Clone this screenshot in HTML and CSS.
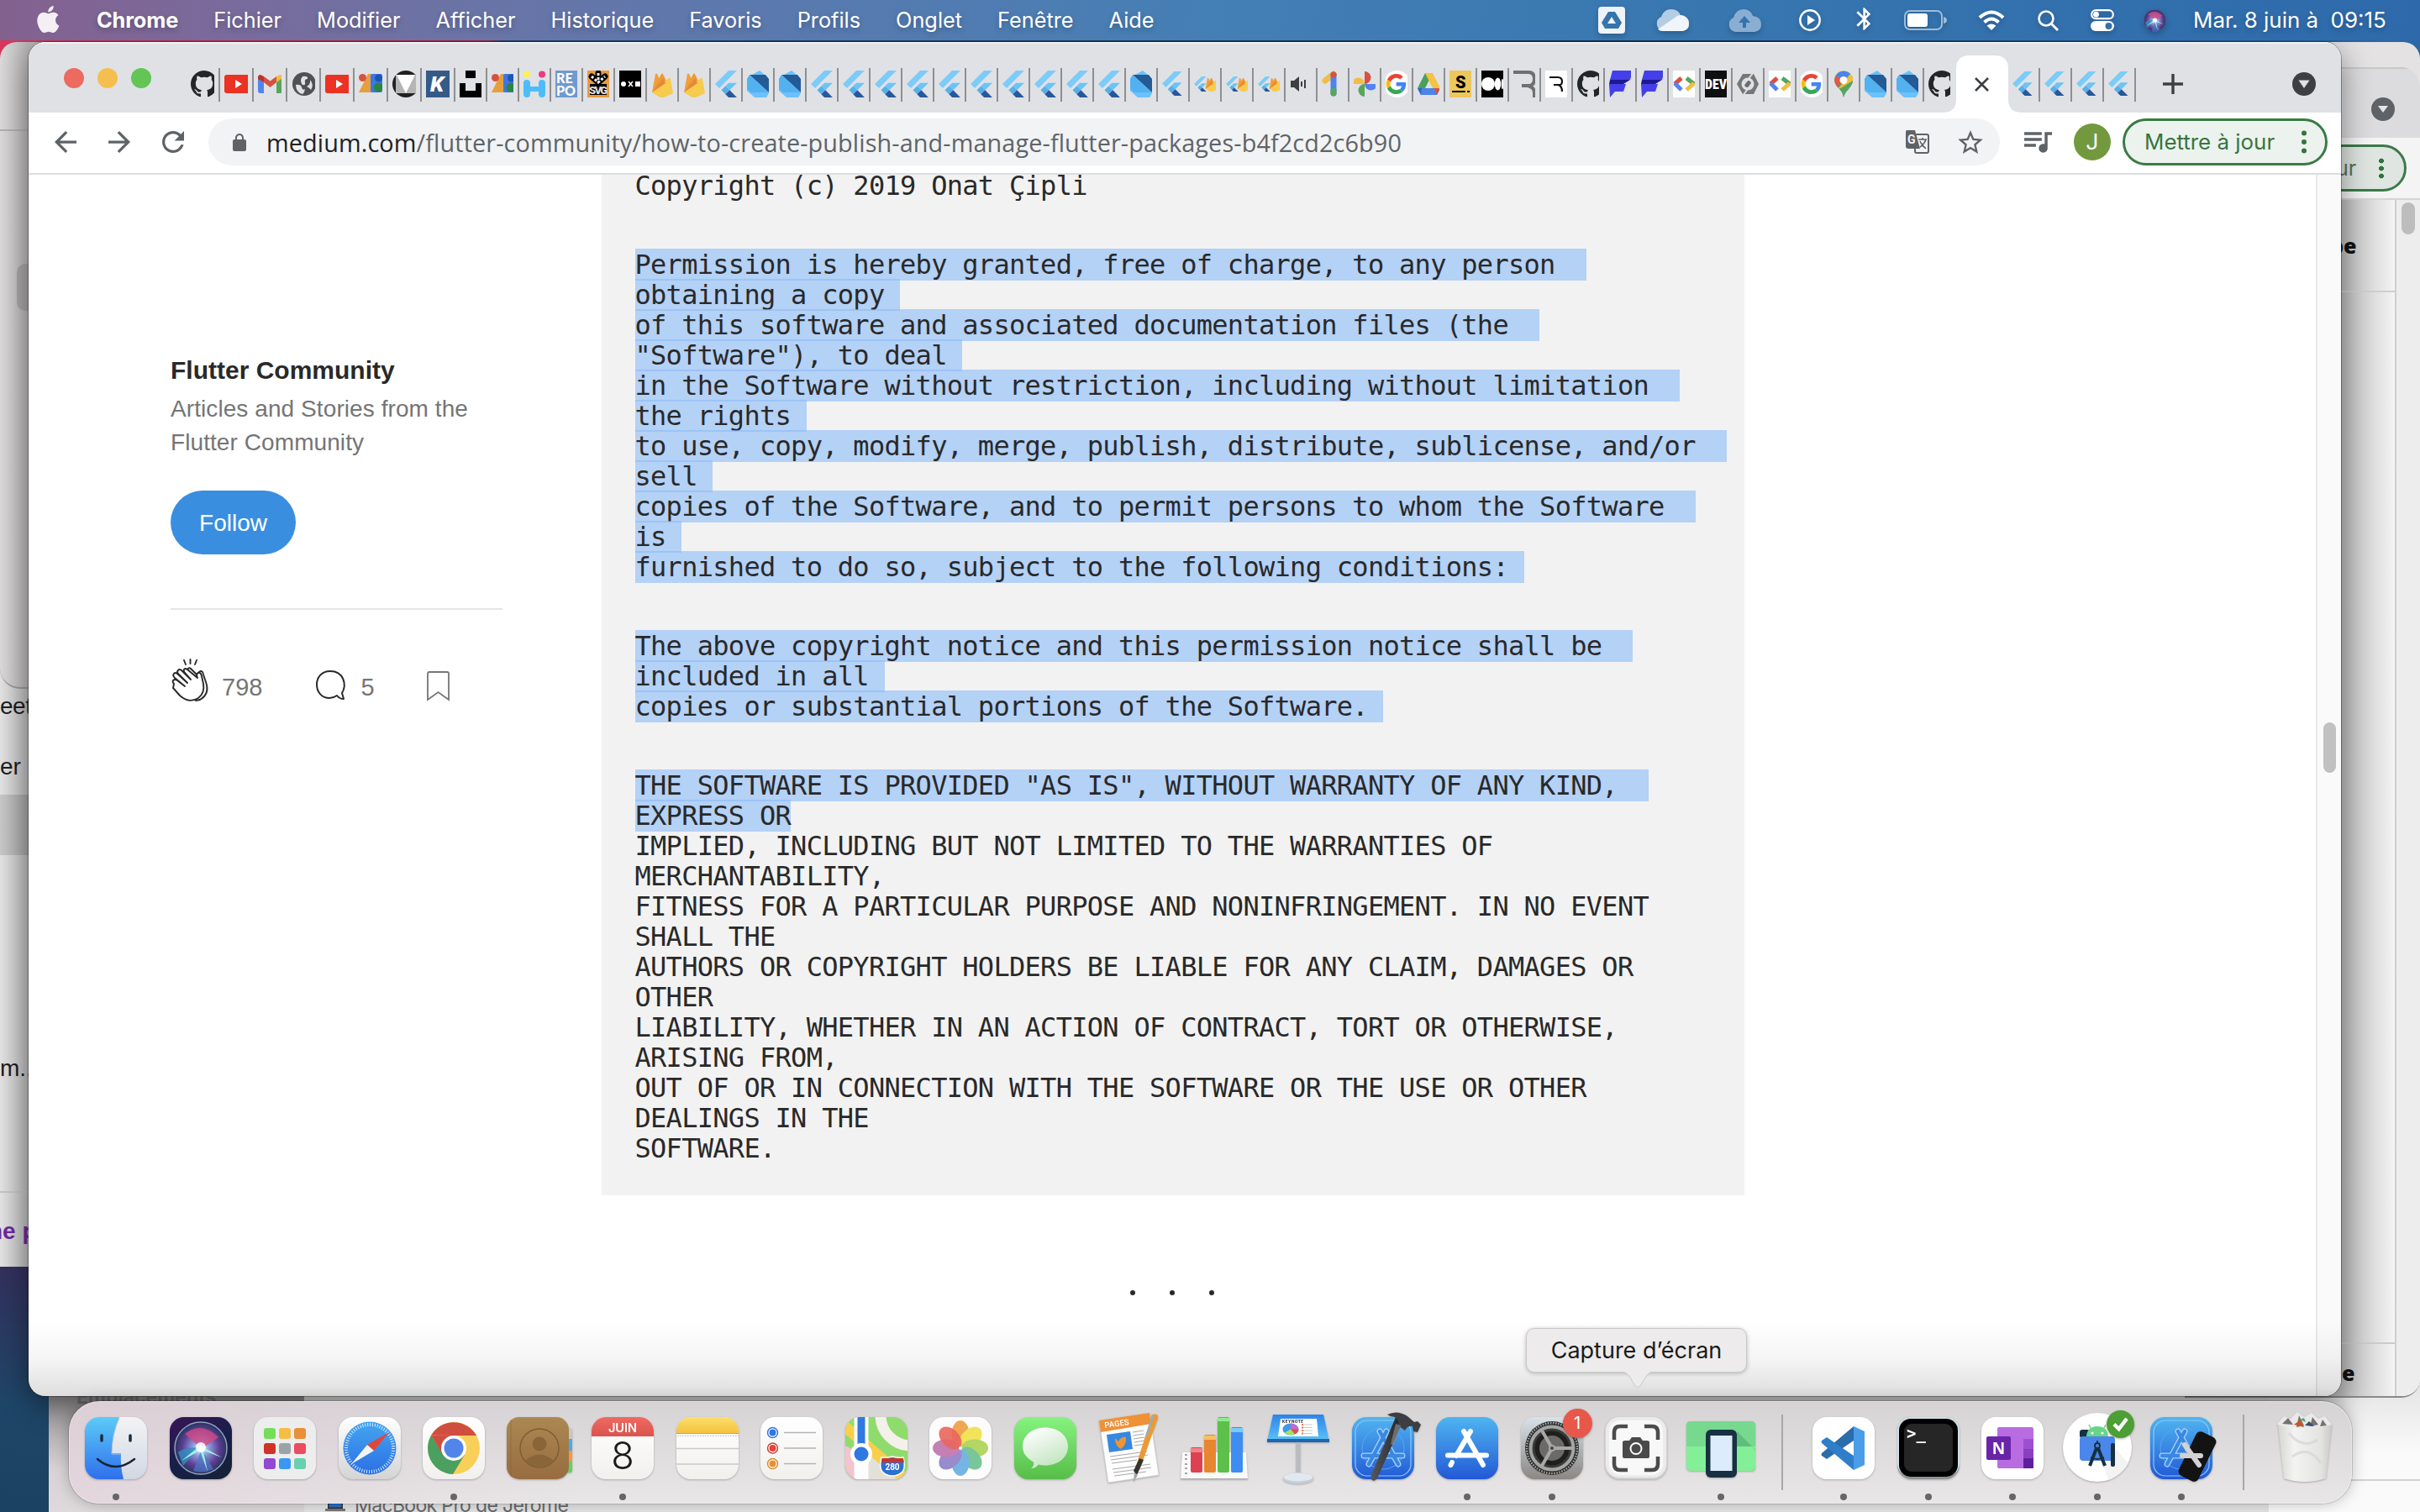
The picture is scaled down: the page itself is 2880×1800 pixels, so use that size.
FILE: index.html
```html
<!DOCTYPE html>
<html lang="fr">
<head>
<meta charset="utf-8">
<title>How to create, publish and manage Flutter packages</title>
<link rel="stylesheet" href="styles.css">
</head>
<body>
<svg class="sprite" aria-hidden="true">
<defs>
<linearGradient id="gBlue" x2="0" y2="1"><stop stop-color="#4fb4f0"/><stop offset="1" stop-color="#2259d6"/></linearGradient>
<linearGradient id="gFinder" x2="0" y2="1"><stop stop-color="#5ccbf8"/><stop offset="1" stop-color="#2f6fec"/></linearGradient>
<linearGradient id="gLight" x2="0" y2="1"><stop stop-color="#f3f3f5"/><stop offset="1" stop-color="#d0d8e4"/></linearGradient>
<linearGradient id="gWhite" x2="0" y2="1"><stop stop-color="#fff"/><stop offset="1" stop-color="#f1f0ee"/></linearGradient>
<linearGradient id="gSafari" x2="0" y2="1"><stop stop-color="#fff"/><stop offset="1" stop-color="#d4d4d4"/></linearGradient>
<linearGradient id="gCompass" x2="0" y2="1"><stop stop-color="#44a6f0"/><stop offset="1" stop-color="#2b6fe4"/></linearGradient>
<linearGradient id="gSiri" x2=".6" y2="1"><stop stop-color="#3a1458"/><stop offset=".6" stop-color="#171f4a"/><stop offset="1" stop-color="#17213b"/></linearGradient>
<radialGradient id="gOrb"><stop stop-color="#fff"/><stop offset=".3" stop-color="#8d9fe0"/><stop offset=".7" stop-color="#5f3f94"/><stop offset="1" stop-color="#25345f"/></radialGradient>
<linearGradient id="gBrown" x2="0" y2="1"><stop stop-color="#ab8852"/><stop offset="1" stop-color="#986c40"/></linearGradient>
<linearGradient id="gYellow" x2="0" y2="1"><stop stop-color="#fbdf6c"/><stop offset="1" stop-color="#f5c23c"/></linearGradient>
<linearGradient id="gRed" x2="0" y2="1"><stop stop-color="#f06a62"/><stop offset="1" stop-color="#d9544c"/></linearGradient>
<linearGradient id="gGreen" x2="0" y2="1"><stop stop-color="#86f37f"/><stop offset="1" stop-color="#57bd49"/></linearGradient>
<linearGradient id="gBubble" x1=".2" x2=".7" y2="1"><stop stop-color="#fff"/><stop offset="1" stop-color="#bfe3bc"/></linearGradient>
<linearGradient id="gPref" x2="0" y2="1"><stop stop-color="#d9e2ea"/><stop offset="1" stop-color="#8b8784"/></linearGradient>
<linearGradient id="gHammer" x2="1"><stop stop-color="#55585c"/><stop offset="1" stop-color="#222326"/></linearGradient>
<linearGradient id="gBin" x2="1"><stop stop-color="#d5d5d3"/><stop offset=".3" stop-color="#f3f3f2"/><stop offset=".8" stop-color="#e3e3e2"/><stop offset="1" stop-color="#c9c9c8"/></linearGradient>
<linearGradient id="gKey" x2="0" y2="1"><stop stop-color="#2e83ea"/><stop offset="1" stop-color="#5cc5f6"/></linearGradient>
<clipPath id="tile" visibility="visible"><rect width="74" height="74" rx="17" visibility="visible"/></clipPath>
</defs>

<symbol id="github" viewBox="0 0 16 16"><path fill="#22262a" d="M8 0C3.58 0 0 3.58 0 8c0 3.54 2.29 6.53 5.47 7.59.4.07.55-.17.55-.38 0-.19-.01-.82-.01-1.49-2.01.37-2.53-.49-2.69-.94-.09-.23-.48-.94-.82-1.13-.28-.15-.68-.52-.01-.53.63-.01 1.08.58 1.23.82.72 1.21 1.87.87 2.33.66.07-.52.28-.87.51-1.07-1.78-.2-3.64-.89-3.64-3.95 0-.87.31-1.59.82-2.15-.08-.2-.36-1.02.08-2.12 0 0 .67-.21 2.2.82.64-.18 1.32-.27 2-.27s1.36.09 2 .27c1.53-1.04 2.2-.82 2.2-.82.44 1.1.16 1.92.08 2.12.51.56.82 1.27.82 2.15 0 3.07-1.87 3.75-3.65 3.95.29.25.54.73.54 1.48 0 1.07-.01 1.93-.01 2.2 0 .21.15.46.55.38A8.01 8.01 0 0 0 16 8c0-4.42-3.58-8-8-8z"/></symbol>
<symbol id="youtube" viewBox="0 0 32 32"><rect y="5" width="32" height="22" rx="3" fill="#eb3223"/><path d="M13 11v10l8-5z" fill="#fff"/></symbol>
<symbol id="gmail" viewBox="0 0 32 32"><path d="M0 8v16q0 3 3 3h4V14z" fill="#5383ec"/><path d="M22 27h4q3 0 3-3V8l-7 6z" fill="#58a55c"/><path d="M7 14V7l7.500 5.500L22 7v7l-7.500 6z" fill="#d85140"/><path d="M0 8q0-3 3-3l4 2v7L0 10z" fill="#b8352b"/><path d="M29 8q0-3-3-3l-4 2v7l7-5z" fill="#f1bd42"/></symbol>
<symbol id="globe" viewBox="0 0 32 32"><circle cx="15" cy="16" r="14" fill="#4e5155"/><path d="M5 17q6-1 7 3t4 2q-1 5-3 6Q5 26 5 17zm8-10q7-1 6 3-4 0-3 4t-3 3q-4-5 0-10zm9 4q5 6 1 12-2-3-5-4 5-3 4-8z" fill="#dfe1e5"/></symbol>
<symbol id="ads" viewBox="0 0 32 32"><path d="M11 4h4v22H0z" fill="#e5a03c"/><circle cx="4.500" cy="8.500" r="4.500" fill="#d85140"/><rect x="14" y="4" width="14" height="22" rx="2" fill="#3a78e4"/><circle cx="23.500" cy="9" r="4.500" fill="#1f55b3"/><circle cx="23" cy="20" r="5.500" fill="#2a8545"/></symbol>
<symbol id="material" viewBox="0 0 32 32"><circle cx="16" cy="16" r="16" fill="#212121"/><path d="M4 5h24v22H4z" fill="#b5b5b5"/><path d="M5 5h22L16 27z" fill="#fff"/></symbol>
<symbol id="kirby" viewBox="0 0 32 32"><path d="M0 0h32v32H0z" fill="#355a88"/><text x="5" y="25" font-family="Roboto" font-weight="900" font-style="italic" font-size="26" fill="#fff">K</text></symbol>
<symbol id="unsplash" viewBox="0 0 32 32"><path d="M7 0h12v9H7zM0 15h7v9h12v-9h7v17H0z"/></symbol>
<symbol id="hashnode" viewBox="0 0 32 32"><circle cx="4" cy="4.500" r="4" fill="#fdf151"/><circle cx="22" cy="4.500" r="4" fill="#ea3a80"/><path d="M0 15a4 4 0 0 1 8 0v4h10v-4a4 4 0 0 1 8 0v13a4 4 0 0 1-8 0v-3H8v3a4 4 0 0 1-8 0z" fill="#4dbdfa"/></symbol>
<symbol id="repo" viewBox="0 0 32 32"><path d="M0 0h32v32H0z" fill="#7099cf"/><g font-family="Lato" font-weight="900" font-size="16" fill="#fff"><text x="1" y="14.500">RE</text><text x="1" y="29.500">PO</text></g></symbol>
<symbol id="svgfav" viewBox="0 0 32 32"><path d="M0 0h32v32H0z" fill="#e99b3e"/><path d="M3 16h20v13H3z"/><path d="M13 3v11M5 7l8 7 8-7" stroke="#000" stroke-width="7" stroke-linecap="round"/><path d="M13 3v11M5 7l8 7 8-7" stroke="#eee" stroke-width="3" stroke-dasharray="3 2"/><text x="2" y="28" font-family="Roboto" font-weight="900" font-size="13" textLength="22" fill="#ddd">SVG</text></symbol>
<symbol id="oxo" viewBox="0 0 32 32"><path d="M0 0h32v32H0z"/><circle cx="5" cy="16" r="3" fill="#fff"/><path d="M11 13l5 6m0-6l-5 6" stroke="#fff" stroke-width="1.500"/><path d="M19 13h6v6h-6z" fill="#fff"/></symbol>
<symbol id="firebase" viewBox="0 0 32 32"><path d="M1 26L5 4q1-1 2 0l4 8z" fill="#f0a03b"/><path d="M1 26L11 6l2-3 2 3 9 20z" fill="#ee9a37"/><path d="M1 26L21 9q2-1 2 1l3 17-11 5q-2 1-4 0z" fill="#f7cb4d"/><path d="M1 26L14 9l3 6z" fill="#e8873a"/></symbol>
<symbol id="flutter" viewBox="0 0 32 32"><g transform="translate(-3) scale(1.333)"><path fill="#7ccbf8" d="M14.300 0L2.300 12 6 15.700 21.700 0z"/><path fill="#6cc3f7" d="M14.300 11.070L11.500 13.840l3.740 3.690 6.460-6.460z"/><path fill="#57aeea" d="M7.860 17.530l3.690-3.690 3.690 3.690-3.690 3.700z"/><path fill="#27599a" d="M11.550 21.230L14.330 24h7.370l-6.460-6.470z"/></g></symbol>
<symbol id="dart" viewBox="0 0 32 32"><path d="M0 24V10L6 5l9-5 6 5 5 5v17l-3 5H9z" fill="#6ac1fb"/><path d="M3 5h19l4 5v16z" fill="#245a96"/><path d="M3 5l23 21H5l-5-4V10z" fill="#54b1ef"/></symbol>
<symbol id="flutterfire" viewBox="0 0 32 32"><svg y="6" width="17" height="20" viewBox="0 0 30 32"><use href="#flutter" width="32" height="32"/></svg><svg x="13" y="6" width="14" height="20" viewBox="0 0 24 32"><use href="#firebase" width="32" height="32"/></svg></symbol>
<symbol id="speaker" viewBox="0 0 32 32"><path d="M1 12h4l6-5v18l-6-5H1zm12 1h2v6h-2zm4-2h2v10h-2z" fill="#3c4043"/></symbol>
<symbol id="one" viewBox="0 0 32 32"><path d="M4 12l10-8" stroke="#f1bd42" stroke-width="7" stroke-linecap="round"/><path d="M14 5v22" stroke="#4f83ee" stroke-width="7" stroke-linecap="round"/><path d="M14 24v3" stroke="#58a55c" stroke-width="7" stroke-linecap="round"/><circle cx="14" cy="5" r="3.600" fill="#d85140"/></symbol>
<symbol id="photos" viewBox="0 0 32 32"><path d="M13 1a7 7 0 0 1 0 15z" fill="#d85140"/><path d="M28 16a7 7 0 0 1-15 0z" fill="#5383ec"/><path d="M13 31a7 7 0 0 1 0-15z" fill="#58a55c"/><path d="M-2 16a7 7 0 0 1 15 0z" fill="#f1bd42"/></symbol>
<symbol id="google" viewBox="0 0 48 48"><circle cx="20" cy="24" r="24" fill="#fff"/><g transform="translate(1 6) scale(.75)"><path fill="#ea4335" d="M24 9.500c3.540 0 6.710 1.220 9.210 3.600l6.850-6.850C35.900 2.380 30.470 0 24 0 14.620 0 6.510 5.380 2.560 13.220l7.980 6.190C12.430 13.720 17.740 9.500 24 9.500z"/><path fill="#4285f4" d="M46.980 24.550c0-1.570-.15-3.090-.38-4.550H24v9.020h12.940c-.58 2.960-2.260 5.480-4.780 7.180l7.730 6c4.510-4.180 7.090-10.360 7.090-17.650z"/><path fill="#fbbc05" d="M10.530 28.590c-.48-1.450-.76-2.990-.76-4.590s.27-3.140.76-4.590l-7.980-6.190C.92 16.460 0 20.120 0 24c0 3.880.92 7.540 2.560 10.780l7.970-6.190z"/><path fill="#34a853" d="M24 48c6.480 0 11.930-2.130 15.890-5.810l-7.730-6c-2.150 1.450-4.920 2.300-8.160 2.300-6.260 0-11.570-4.220-13.470-9.910l-7.980 6.190C6.510 42.620 14.620 48 24 48z"/></g></symbol>
<symbol id="drive" viewBox="0 0 32 32"><path d="M9 3h9L5 29 0 21z" fill="#4aa05a"/><path d="M9 3h9l9 18h-9z" fill="#f5c243"/><path d="M0 21h27l-4 8H4z" fill="#4d83ec"/><path d="M0 21l5-.100L4 29z" fill="#2f66c9"/><path d="M20 21h7l-4 8z" fill="#d85140"/></symbol>
<symbol id="sfav" viewBox="0 0 32 32"><path d="M0 0h32v32H0z" fill="#edc75c"/><text x="7" y="21" font-family="Roboto" font-weight="900" font-size="20">S</text><path d="M3 24h16v2H3zm18 0h3v2h-3z"/></symbol>
<symbol id="medium" viewBox="0 0 32 32"><path d="M0 0h32v32H0z"/><ellipse cx="8" cy="16" rx="8" ry="8" fill="#fff"/><ellipse cx="19.500" cy="16" rx="3.700" ry="7.500" fill="#fff"/><ellipse cx="25" cy="16" rx="1.300" ry="6.500" fill="#fff"/></symbol>
<symbol id="rgray" viewBox="0 0 32 32"><path d="M0 2h18q7 0 7 8t-7 8h-8M17 18q8 2 8 8v6" fill="none" stroke="#707070" stroke-width="4"/></symbol>
<symbol id="rblack" viewBox="0 0 32 32"><path d="M0 0h32v32H0z" fill="#fff"/><path d="M5 8h10q5 0 5 5t-5 4h-5M15 17q5 1 5 8" fill="none" stroke="#111" stroke-width="2.200"/></symbol>
<symbol id="ff" viewBox="0 0 32 32"><path d="M4 0h24l-3 11H1z" fill="#443fe8"/><path d="M1 11h24l-8 5H0z" fill="#1c1a93"/><path d="M0 16h20l-3 9H7l-6 7z" fill="#443fe8"/></symbol>
<symbol id="codelabs" viewBox="0 0 32 32"><path d="M0 0h32v32H0z" fill="#fff"/><path d="M2 16l8-7" stroke="#d85140" stroke-width="5"/><path d="M2 15l8 8" stroke="#5383ec" stroke-width="5"/><path d="M16 9l9 7" stroke="#58a55c" stroke-width="5"/><path d="M25 15l-9 8" stroke="#f1bd42" stroke-width="5"/></symbol>
<symbol id="dev" viewBox="0 0 32 32"><path d="M0 0h32v32H0z" fill="#0d0f10"/><text x="0" y="22" font-family="Roboto Condensed,Roboto" font-weight="900" font-size="17" textLength="26" lengthAdjust="spacingAndGlyphs" fill="#fff">DEV</text></symbol>
<symbol id="hex" viewBox="0 0 32 32"><path d="M7 4h13l6 12-6 12H7L0 16z" fill="#777"/><circle cx="13" cy="16" r="7.500" fill="#dfe1e5"/><circle cx="13" cy="16" r="4" fill="#6b6b6b"/><path d="M8 17L20 2M18 15L7 30" stroke="#dfe1e5" stroke-width="2"/></symbol>
<symbol id="maps" viewBox="0 0 32 32"><path d="M13 32Q12 24 6 20 2 15 2 11.500a11 11 0 0 1 22 0Q24 16 19 22q-5 5-6 10z" fill="#58a55c"/><path d="M4 6A11 11 0 0 1 21 4l-8 7z" fill="#4e82ee"/><path d="M4 6l9 6-7 8Q0 13 4 6z" fill="#e2574c"/><path d="M21 4q5 5 2 12l-9 6-7-1z" fill="#f1bd42"/><path d="M24 12q0 4-5 10-5 5-6 10-1-6-5-10z" fill="#58a55c"/><circle cx="13" cy="11.500" r="4.500" fill="#fff"/></symbol>

<symbol id="finder" viewBox="0 0 74 74"><g clip-path="url(#tile)"><path d="M0 0h74v74H0z" fill="url(#gLight)"/><path d="M0 0h41q-9 20-9 43h11q-1 16 3 31H0z" fill="url(#gFinder)"/></g><path d="M20 22v6m34-6v6" stroke="#1d2b3c" stroke-width="3.500" stroke-linecap="round"/><path d="M41 1q-9 20-9 43h11" fill="none" stroke="#a9c4df"/><path d="M15 50q21 18 44 0" fill="none" stroke="#182433" stroke-width="2.500" stroke-linecap="round"/></symbol>
<symbol id="siri" viewBox="0 0 74 74"><rect width="74" height="74" rx="17" fill="url(#gSiri)"/><circle cx="37" cy="37" r="31" fill="url(#gOrb)" stroke="#8fa2b8" stroke-width="1.500"/><path d="M18 20Q38 4 58 24L38 38z" fill="#d14a86" opacity=".8"/><path d="M10 42q6-6 26-6l-20 22z" fill="#2f8fc0" opacity=".8"/><path d="M38 38l14 24q-12 6-24 2z" fill="#4b78c8" opacity=".7"/><path d="M14 52l22-18 26 14-22-8 5 25-9-25z" fill="#9ff0de"/><circle cx="37" cy="36" r="6" fill="#fff" opacity=".9"/></symbol>
<symbol id="launchpad" viewBox="0 0 74 74"><rect width="74" height="74" rx="17" fill="#ededee"/><g><rect x="12" y="13" width="14" height="13" rx="3" fill="#74de5c"/><rect x="30" y="13" width="14" height="13" rx="3" fill="#f6bd45"/><rect x="48" y="13" width="14" height="13" rx="3" fill="#e98f35"/><rect x="12" y="31" width="14" height="13" rx="3" fill="#cf3327"/><rect x="30" y="31" width="14" height="13" rx="3" fill="#9aa3a5"/><rect x="48" y="31" width="14" height="13" rx="3" fill="#ec4c60"/><rect x="12" y="49" width="14" height="13" rx="3" fill="#9248d2"/><rect x="30" y="49" width="14" height="13" rx="3" fill="#3a98f2"/><rect x="48" y="49" width="14" height="13" rx="3" fill="#6acfae"/></g></symbol>
<symbol id="safari" viewBox="0 0 74 74"><rect width="74" height="74" rx="17" fill="url(#gSafari)"/><circle cx="37" cy="37" r="31.500" fill="url(#gCompass)"/><circle cx="37" cy="37" r="28" fill="none" stroke="#d8ebfb" stroke-width="4" stroke-dasharray="1 1.930"/><path d="M60 18L42 40l-8-7z" fill="#e2463a"/><path d="M15 56l19-23 8 7z" fill="#f3f3f3"/></symbol>
<symbol id="chrome" viewBox="0 0 74 74"><rect width="74" height="74" rx="17" fill="url(#gWhite)"/><circle cx="37" cy="37" r="31" fill="#f9d057"/><path d="M10.200 21.500A31 31 0 0 1 64 22H37z" fill="#d04e40"/><path d="M10.200 21.500A31 31 0 0 0 36 68L50 45 24 44z" fill="#4b9f5f"/><path d="M10.200 21.500L24 45l13-23z" fill="#d04e40"/><circle cx="37" cy="37" r="15" fill="#fff"/><circle cx="37" cy="37" r="11.500" fill="#5185ec"/></symbol>
<symbol id="contacts" viewBox="0 0 78 74"><rect x="66" y="13" width="12" height="16" rx="3" fill="#c9c6bd"/><rect x="66" y="26" width="12" height="14" fill="#4fa9ea"/><rect x="66" y="40" width="12" height="13" fill="#f09a3c"/><rect x="66" y="52" width="12" height="14" rx="3" fill="#67cf5f"/><rect width="74" height="74" rx="15" fill="url(#gBrown)"/><path d="M5 3v68" stroke="#866035" opacity=".5"/><circle cx="39" cy="37" r="23" fill="none" stroke="#7f5d34" stroke-width="1.500"/><circle cx="39" cy="32" r="8.500" fill="#8a653a"/><path d="M22 52q17-15 34 0-17 16-34 0z" fill="#8a653a"/></symbol>
<symbol id="calendar" viewBox="0 0 74 74"><g clip-path="url(#tile)"><path d="M0 0h74v74H0z" fill="url(#gWhite)"/><path d="M0 0h74v23H0z" fill="url(#gRed)"/></g><text x="37" y="17.500" text-anchor="middle" font-family="Inter" font-weight="600" font-size="14.500" fill="#fff">JUIN</text><text x="37" y="62" text-anchor="middle" font-family="Inter" font-weight="300" font-size="45" fill="#1b1b1b">8</text></symbol>
<symbol id="notes" viewBox="0 0 74 74"><g clip-path="url(#tile)"><path d="M0 0h74v74H0z" fill="url(#gWhite)"/><path d="M0 0h74v19H0z" fill="url(#gYellow)"/><path d="M0 19.500h74" stroke="#b3a98c"/><path d="M1 22.500h74" stroke="#bbb" stroke-dasharray="1.500 1.500"/><path d="M0 37.500h74M0 56h74" stroke="#ccc9c9" stroke-width="1.500"/></g></symbol>
<symbol id="reminders" viewBox="0 0 74 74"><rect width="74" height="74" rx="17" fill="url(#gWhite)"/><path d="M28 18.500h38M28 37h38M28 55.500h38" stroke="#b4b2b8" stroke-width="1.300"/><g stroke-width="1.500"><circle cx="14.500" cy="18.500" r="6" fill="#fff" stroke="#2e76e8"/><circle cx="14.500" cy="37" r="6" fill="#fff" stroke="#d63f33"/><circle cx="14.500" cy="55.500" r="6" fill="#fff" stroke="#dd8a2c"/></g><circle cx="14.500" cy="18.500" r="4" fill="#2e76e8"/><circle cx="14.500" cy="37" r="4" fill="#e24438"/><circle cx="14.500" cy="55.500" r="4" fill="#e8922f"/></symbol>
<symbol id="mapsapp" viewBox="0 0 74 74"><g clip-path="url(#tile)"><path d="M0 0h74v74H0z" fill="#8fdc6c"/><path d="M0 34l26 14v26H0z" fill="#f4c3ce"/><path d="M26 44l48 30H26z" fill="#e2e0d8"/><path d="M-2 10l76 66" stroke="#f7cf4d" stroke-width="13"/><circle cx="78" cy="-2" r="36" fill="none" stroke="#f3f1ea" stroke-width="13"/><path d="M19 0v74" stroke="#fdfdfd" stroke-width="17"/><path d="M19 0v40" stroke="#3079e2" stroke-width="9"/></g><circle cx="19" cy="44" r="13" fill="#fff"/><circle cx="19" cy="44" r="8.500" fill="#2f78e3"/><path d="M43 48q6 1 13-1 7 2 13 1 3 12-1 17-5 5-12 5t-12-5q-4-5-1-17z" fill="#2e6fd2" stroke="#fff" stroke-width="1.500"/><path d="M44 49h25l1 5H43z" fill="#c8352c"/><text x="56" y="63" text-anchor="middle" font-family="Roboto" font-weight="700" font-size="10" fill="#fff">280</text></symbol>
<symbol id="photosapp" viewBox="0 0 74 74"><rect width="74" height="74" rx="17" fill="#fcfcfc"/><g opacity=".85"><ellipse cx="37" cy="20" rx="10.500" ry="16" fill="#f09836"/><ellipse cx="37" cy="20" rx="10.500" ry="16" fill="#f0df3e" transform="rotate(45 37 37)"/><ellipse cx="37" cy="20" rx="10.500" ry="16" fill="#a9cf4b" transform="rotate(90 37 37)"/><ellipse cx="37" cy="20" rx="10.500" ry="16" fill="#63bd87" transform="rotate(135 37 37)"/><ellipse cx="37" cy="20" rx="10.500" ry="16" fill="#5fa8e0" transform="rotate(180 37 37)"/><ellipse cx="37" cy="20" rx="10.500" ry="16" fill="#8779c4" transform="rotate(225 37 37)"/><ellipse cx="37" cy="20" rx="10.500" ry="16" fill="#bb6aa8" transform="rotate(270 37 37)"/><ellipse cx="37" cy="20" rx="10.500" ry="16" fill="#e64d41" transform="rotate(315 37 37)" opacity=".9"/></g><circle cx="37" cy="37" r="2" fill="#fff"/></symbol>
<symbol id="messages" viewBox="0 0 74 74"><rect width="74" height="74" rx="17" fill="url(#gGreen)"/><path d="M37 12.500c16 0 27 10 27 22.500S53 57.500 37 57.500q-5 0-8-1-3 4-9 5 4-4 3-8C15 49 10 43 10 35c0-12.500 11-22.500 27-22.500z" fill="url(#gBubble)"/></symbol>
<symbol id="pages" viewBox="0 0 74 84"><path d="M1 9l60-9 11 74-60 9z" fill="#fdfdfd" stroke="#ccc" stroke-width=".6"/><path d="M1 9l60-9 2 13L3 23z" fill="#ee9137"/><text x="8" y="18" transform="rotate(-8 8 18)" font-family="Roboto" font-weight="500" font-size="9.500" fill="#fff">PAGES</text><path d="M10 26l28-4 3 21-28 4z" fill="#3687de"/><path d="M20 30q5 6 5 2 4-5 8-3 1 9-6 14-7-3-7-13z" fill="#ef9430"/><path d="M41 23l13-2m-12.500 6l13-2m-12.500 6l13-2m-12.500 6l13-2m-12.500 6l13-2M14 52l44-6m-43 10l44-6m-43 10l30-4M17 67l45-6m-44 10l45-6m-44 10l38-5" stroke="#aaa" stroke-width="1.200"/><path d="M64 2q8-2 7 4L50 66l-5-3z" fill="#eb9a34"/><path d="M65 4L57 28" stroke="#7eb3e2" stroke-width="2"/><path d="M54 56l-5-2-7 15 4 5z" fill="#333"/><path d="M43 71l-1 11 5-8z" fill="#9ca6ac"/></symbol>
<symbol id="numbers" viewBox="0 0 80 74"><path d="M2 42h76l2 32H0z" fill="#fafafa"/><path d="M0 74h80" stroke="#a9a9a9" stroke-width="2"/><path d="M5 45h3m-3 5h3m-3 6h3m-3 5h3m-3 6h3" stroke="#888" stroke-width="1.500"/><rect x="12" y="36" width="14" height="30" rx="2" fill="#dd4253"/><path d="M12 37h14v5H12z" fill="#f08486"/><rect x="28" y="21" width="14" height="45" rx="2" fill="#e8862f"/><path d="M28 22h14v5H28z" fill="#f7c064"/><rect x="44" width="14" height="66" rx="2" fill="#5cc04a"/><path d="M44 1h14v4H44z" fill="#8cec8c"/><rect x="60" y="12" width="14" height="54" rx="2" fill="#3d8ef0"/><path d="M60 13h14v5H60z" fill="#79cdf8"/></symbol>
<symbol id="keynote" viewBox="0 0 74 84"><path d="M34.500 32h5v44h-5z" fill="#b9bcbe"/><ellipse cx="37" cy="76" rx="18" ry="6.500" fill="#c3cedb"/><ellipse cx="37" cy="74.500" rx="17" ry="5" fill="#e2e8ee"/><path d="M7 0h60l7 32H0z" fill="url(#gKey)"/><path d="M0 29h74v4H0z" fill="#1e66b4"/><path d="M16 5h43l2 21H13z" fill="#fff"/><text x="18" y="9.500" font-family="Inter" font-weight="800" font-size="4.500" textLength="25" fill="#333">KEYNOTE</text><ellipse cx="28" cy="17.500" rx="9.500" ry="7" fill="#3f9ae8"/><path d="M28 17.500v-7q8 1 9 7z" fill="#c867d4"/><path d="M28 17.500h9.500q0 4-5 6z" fill="#e2504a"/><path d="M28 17.500l5 6q-8 2-12-2z" fill="#a4e25b"/><path d="M42 12h12m-12 3.500h12M42 19h12m-12 3.500h12" stroke="#ccc" stroke-width="1.200"/><path d="M42 11v13" stroke="#e87a5c" stroke-width="2" stroke-dasharray="2 1.500"/></symbol>
<symbol id="bluea" viewBox="0 0 74 74"><rect width="74" height="74" rx="17" fill="url(#gBlue)"/><rect x="4" y="4" width="66" height="66" rx="14" fill="none" stroke="#8ccaf6" stroke-width="1.200"/><circle cx="37" cy="37" r="25" fill="none" stroke="#5fa4ec"/><g fill="none" stroke-linecap="round"><path d="M41 17L20 56M33 17l22 39M14 46h46" stroke="#a9d2f8" stroke-width="7"/><path d="M41 17L20 56M33 17l22 39M14 46h46" stroke="#3a88e4" stroke-width="4.500"/></g></symbol>
<symbol id="xcode" viewBox="0 0 82 84"><use href="#bluea" y="6" width="74" height="74"/><path d="M52 6l8 6-30 67q-3 4-6 2-3-1-1-6z" fill="url(#gHammer)"/><path d="M42 3Q54-3 66 5l8 7 4-1 4 4-4 9-5-1-1-6q-6-1-9 5l-8-6q2-10-9-11z" fill="#3c3e42"/><path d="M52 14l-6 24 4 2 8-24z" fill="#86898d" opacity=".7"/></symbol>
<symbol id="appstore" viewBox="0 0 74 74"><rect width="74" height="74" rx="17" fill="url(#gBlue)"/><g stroke="#fff" stroke-width="6" stroke-linecap="round"><path d="M41 17L24 46M33 17l23 40M14 45.500h46M19 54l-1.500 3"/></g></symbol>
<symbol id="settings" viewBox="0 0 74 74"><rect width="74" height="74" rx="17" fill="url(#gPref)"/><circle cx="37" cy="37" r="32" fill="#2d2d2d"/><circle cx="37" cy="37" r="30" fill="none" stroke="#a5a8aa" stroke-width="2.500" stroke-dasharray="1.500 1.590"/><circle cx="37" cy="37" r="25.500" fill="#3a3a3a" stroke="#a5a5a3" stroke-width="4"/><circle cx="37" cy="37" r="17.500" fill="#4b4a49" stroke="#1f1f1f" stroke-width="6"/><circle cx="37" cy="37" r="15" fill="#6b6a68"/><path d="M37 37h24M37 37L25 16M37 37L25 58" stroke="#a8a8a6" stroke-width="4"/><circle cx="37" cy="37" r="4" fill="#a8a8a6"/><circle cx="37" cy="37" r="2" fill="#444"/></symbol>
<symbol id="capture" viewBox="0 0 74 74"><rect width="74" height="74" rx="17" fill="#d2d2d2"/><rect x="1" y="0" width="72" height="72" rx="16" fill="#ececec"/><rect x="5" y="4" width="64" height="65" rx="13" fill="#f8f8f8"/><path d="M11 27v-9q0-7 7-7h9M47 11h9q7 0 7 7v9M63 47v9q0 7-7 7h-9M27 63h-9q-7 0-7-7v-9" fill="none" stroke="#4b4b4b" stroke-width="4.500"/><path d="M21 30q0-2 3-2h5l3-4h10l3 4h5q3 0 3 2v17q0 2-3 2H24q-3 0-3-2z" fill="#4a4a4a"/><circle cx="37" cy="37.500" r="6.500" fill="none" stroke="#fff" stroke-width="2"/></symbol>
<symbol id="device" viewBox="0 0 82 74"><rect y="5" width="82" height="59" rx="5" fill="#83ef97"/><path d="M0 35V10q0-5 5-5h72q5 0 5 5v25z" fill="#76d98e"/><path d="M60 17l22 22v20q0 5-5 5H60z" fill="#5fbe7c"/><path d="M60 35h18l4 5v19q0 5-5 5H60z" fill="#83ef97"/><rect x="23" y="15" width="37" height="57" rx="6" fill="#173142"/><path d="M28.500 22h26v42h-26z" fill="#ddecfb"/></symbol>
<symbol id="vscode" viewBox="0 0 74 74"><rect width="74" height="74" rx="17" fill="#fff"/><path d="M49 11v17L17 50l-6-4q-1-2 0-3z" fill="#2b6cab"/><path d="M49 63V46L17 24l-6 4q-1 2 0 3z" fill="#2f7ec9"/><path d="M49 11l13 6v40l-13 6z" fill="#4a9de9"/></symbol>
<symbol id="terminal" viewBox="0 0 74 74"><rect width="74" height="74" rx="17" fill="#8d9193"/><rect width="74" height="71" rx="16" fill="#cfe0e8"/><rect x="2" y="2" width="70" height="69" rx="14" fill="#000"/><rect x="8" y="8" width="58" height="57" rx="9" fill="#262626"/><text x="11" y="26" font-family="DejaVu Sans Mono" font-weight="700" font-size="19" fill="#fff">&gt;_</text></symbol>
<symbol id="onenote" viewBox="0 0 74 74"><rect width="74" height="74" rx="17" fill="#fff"/><rect x="19" y="12" width="43" height="49" rx="2" fill="#b96ce2"/><path d="M50 26h12v12H50z" fill="#9c4fd0"/><path d="M50 38h12v11H50z" fill="#8a3fc0"/><path d="M50 49h12v12H50z" fill="#5f1f9d"/><rect x="6" y="23" width="29" height="28" rx="2" fill="#6a24a8"/><text x="20.500" y="44" text-anchor="middle" font-family="Open Sans" font-weight="700" font-size="19" fill="#fff">N</text></symbol>
<symbol id="studio" viewBox="0 0 82 82"><circle cx="41" cy="41" r="41" fill="#fff"/><path d="M48 62l16-18 14 16q-8 14-24 20z" fill="#f3f3f3"/><rect x="20" y="20" width="12" height="10" rx="3" fill="#173142"/><rect x="20" y="28" width="42" height="29" rx="4" fill="#4b87ea"/><path d="M28 28q1-12 13-12t13 12z" fill="#67d588"/><path d="M33 18l-2-4m18 4l2-4" stroke="#67d588" stroke-width="1.500"/><circle cx="35" cy="24" r="1.500" fill="#fff"/><circle cx="47" cy="24" r="1.500" fill="#fff"/><rect x="57" y="36" width="5" height="28" rx="2" fill="#173142"/><g fill="none" stroke="#173142"><path d="M40 42l-8 21M42 42l8 21" stroke-width="4"/><circle cx="41" cy="39" r="3" stroke-width="2"/><path d="M33 53q8 4 16 0M41 33v4" stroke-width="1.800"/></g></symbol>
<symbol id="simulator" viewBox="0 0 80 80"><use href="#bluea" width="74" height="74"/><rect x="43" y="18" width="26" height="58" rx="6" transform="rotate(26 56 47)" fill="#131313"/><path d="M41 33l17 24M38 46h22" stroke="#d2d2d2" stroke-width="6" stroke-linecap="round"/></symbol>
<symbol id="trash" viewBox="0 0 66 84"><path d="M0 14l8-9 8 3 8-8 8 6 9-5 8 7 8-3 8 10-6 10H8z" fill="#e9e9e9"/><path d="M6 14l7-7 6 8zm20-10l6 12-9 2zm16 2l7 9-10 2zm12 3l5 7-8 1z" fill="#77706c"/><path d="M20 15l8-6 4 9z" fill="#c4572f"/><path d="M33 16l5-5 6 6z" fill="#3b4a78"/><path d="M27 9l5-2 2 5z" fill="#4ba77b"/><path d="M1 15q32 8 64 0l-7 64q-25 8-50 0z" fill="url(#gBin)"/><path d="M14 25q16 20 34 8m-30 20q20-14 34 8" fill="none" stroke="#d3d1cf" stroke-width="3" opacity=".6"/></symbol>
</svg>

<section class="win win-back-left"><i class="divider"></i><i class="knob"></i></section>
<section class="win win-list">
  <p>eet</p><p>er</p><p class="picked"></p><p class="far">m...</p><p class="link">ne p</p>
</section>
<section class="win win-finder">
  <aside><b>Emplacements</b></aside>
  <div class="finder-row"><svg viewBox="0 0 24 16"><path d="M3 0h18v12H3z" fill="#333"/><path d="M4.500 1.500h15v9h-15z" fill="#2a6fc8"/><path d="M0 12h24v3H0z" fill="#777"/></svg>MacBook Pro de Jérôme</div>
</section>
<section class="win win-far-right"></section>
<section class="win win-right">
  <header class="right-tabs"><svg viewBox="0 0 28 28"><circle cx="14" cy="14" r="14" fill="#5f6367"/><path d="M8 10h12l-6 8z" fill="#e6e6ea"/></svg></header>
  <div class="right-tools"><span class="right-pill">ur<i></i></span></div>
  <div class="right-page"><div class="right-main"><b>be</b><b class="low">e</b></div><div class="right-track"><i></i></div></div>
</section>

<nav class="menubar">
  <svg class="apple" viewBox="2 0 19.500 24"><path fill="#f4eff5" d="M12.152 6.896c-.948 0-2.415-1.078-3.960-1.040-2.040.027-3.910 1.183-4.961 3.014-2.117 3.675-.546 9.103 1.519 12.090 1.013 1.454 2.208 3.090 3.792 3.039 1.520-.065 2.090-.987 3.935-.987 1.831 0 2.350.987 3.960.948 1.637-.026 2.676-1.480 3.676-2.948 1.156-1.688 1.636-3.325 1.662-3.415-.039-.013-3.182-1.221-3.220-4.857-.026-3.040 2.480-4.494 2.597-4.559-1.429-2.090-3.623-2.324-4.390-2.376-2-.156-3.675 1.090-4.610 1.090zM15.530 3.830c.843-1.012 1.400-2.427 1.245-3.830-1.207.052-2.662.805-3.532 1.818-.780.896-1.454 2.338-1.273 3.714 1.338.104 2.715-.688 3.559-1.701"/></svg>
  <b>Chrome</b><span>Fichier</span><span>Modifier</span><span>Afficher</span><span>Historique</span><span>Favoris</span><span>Profils</span><span>Onglet</span><span>Fenêtre</span><span>Aide</span>
  <div class="status">
    <svg class="st-drive" viewBox="0 0 32 32"><rect width="32" height="32" rx="4" fill="#eef3f8"/><path d="M12 6h8l8 13-4 7H8l-4-7z" fill="#3574ad"/><path d="M16 12l5 8H11z" fill="#eef3f8"/></svg>
    <svg class="st-cloud" viewBox="0 0 40 26"><path d="M9 26a9 9 0 0 1-2-17Q10 0 19 0q8 0 11 7 10 1 10 10 0 8-8 9z" fill="#b3cde3"/><path d="M3 24L26 8q4-2 8 0 6 3 6 9 0 8-8 9H9q-4 0-6-2z" fill="#f1f5f9"/></svg>
    <svg class="st-up" viewBox="0 0 40 27"><path d="M9 27a9 9 0 0 1-2-17Q10 0 19 0q8 0 11 8 10 1 10 10 0 8-8 9z" fill="#8aaed1"/><path d="M20 8l7 8h-5v6h-4v-6h-5z" fill="#3473ae"/></svg>
    <svg class="st-play" viewBox="0 0 26 26"><circle cx="13" cy="13" r="11.700" fill="none" stroke="#fff" stroke-width="2.400"/><path d="M10 7l9 6-9 6z" fill="#fff"/></svg>
    <svg class="st-bt" viewBox="4 1 15 22"><path d="M17.710 7.710L12 2h-1v7.590L6.410 5 5 6.410 10.590 12 5 17.590 6.410 19 11 14.410V22h1l5.710-5.710-4.300-4.290 4.300-4.290zM13 5.830l1.880 1.880L13 9.590V5.830zm1.880 10.460L13 18.170v-3.760l1.880 1.880z" fill="#fff"/></svg>
    <svg class="st-bat" viewBox="0 0 51 24"><rect x="1" y="1" width="44" height="22" rx="6" fill="none" stroke="#9dbdd9" stroke-width="2"/><rect x="4" y="4" width="24" height="16" rx="3" fill="#fff"/><path d="M47 8q4 1 4 4t-4 4z" fill="#9dbdd9"/></svg>
    <svg class="st-wifi" viewBox="0 0 32 24"><g fill="none" stroke="#fff" stroke-width="4"><path d="M2 9q14-13 28 0M7.500 14.500q8.500-8 17 0"/></g><path d="M16 24l-5.500-5.500q5.500-4 11 0z" fill="#fff"/></svg>
    <svg class="st-find" viewBox="0 0 25 25"><circle cx="10" cy="10" r="8.500" fill="none" stroke="#fff" stroke-width="2.600"/><path d="M16 16l8 8" stroke="#fff" stroke-width="3"/></svg>
    <svg class="st-cc" viewBox="0 0 28 26"><rect x="1.200" y="1.200" width="25.600" height="10" rx="5" fill="none" stroke="#fff" stroke-width="2.200"/><circle cx="6.500" cy="6.200" r="3.400" fill="#fff"/><rect y="14" width="28" height="12" rx="6" fill="#fff"/><circle cx="21.500" cy="20" r="4" fill="#3570aa"/></svg>
    <svg class="st-siri" viewBox="6 6 62 62"><use href="#siri" width="74" height="74"/></svg>
    <time>Mar. 8 juin à&nbsp; 09:15</time>
  </div>
</nav>

<main class="browser">
  <header class="tabstrip">
    <div class="lights"><i class="red"></i><i class="amber"></i><i class="green"></i></div>
    <ul class="tabs">
      <li class="wide"><svg><use href="#github"/></svg></li><li class="wide"><svg><use href="#youtube"/></svg></li><li class="wide"><svg><use href="#gmail"/></svg></li><li class="wide"><svg><use href="#globe"/></svg></li><li class="wide"><svg><use href="#youtube"/></svg></li><li class="wide"><svg><use href="#ads"/></svg></li><li class="wide"><svg><use href="#material"/></svg></li><li class="wide"><svg><use href="#kirby"/></svg></li>
      <li><svg><use href="#unsplash"/></svg></li><li><svg><use href="#ads"/></svg></li><li><svg><use href="#hashnode"/></svg></li><li><svg><use href="#repo"/></svg></li><li><svg><use href="#svgfav"/></svg></li><li><svg><use href="#oxo"/></svg></li><li><svg><use href="#firebase"/></svg></li><li><svg><use href="#firebase"/></svg></li><li><svg><use href="#flutter"/></svg></li><li><svg><use href="#dart"/></svg></li><li><svg><use href="#dart"/></svg></li>
      <li><svg><use href="#flutter"/></svg></li><li><svg><use href="#flutter"/></svg></li><li><svg><use href="#flutter"/></svg></li><li><svg><use href="#flutter"/></svg></li><li><svg><use href="#flutter"/></svg></li><li><svg><use href="#flutter"/></svg></li><li><svg><use href="#flutter"/></svg></li><li><svg><use href="#flutter"/></svg></li><li><svg><use href="#flutter"/></svg></li><li><svg><use href="#flutter"/></svg></li>
      <li><svg><use href="#dart"/></svg></li><li><svg class="small"><use href="#flutter"/></svg></li><li><svg><use href="#flutterfire"/></svg></li><li><svg><use href="#flutterfire"/></svg></li><li><svg><use href="#flutterfire"/></svg></li><li><svg><use href="#speaker"/></svg></li><li><svg><use href="#one"/></svg></li><li><svg><use href="#photos"/></svg></li><li><svg><use href="#google"/></svg></li><li><svg><use href="#drive"/></svg></li><li><svg><use href="#sfav"/></svg></li><li><svg><use href="#medium"/></svg></li><li><svg><use href="#rgray"/></svg></li><li><svg><use href="#rblack"/></svg></li><li><svg><use href="#github"/></svg></li><li><svg><use href="#ff"/></svg></li><li><svg><use href="#ff"/></svg></li><li><svg><use href="#codelabs"/></svg></li><li><svg><use href="#dev"/></svg></li><li><svg><use href="#hex"/></svg></li><li><svg><use href="#codelabs"/></svg></li><li><svg><use href="#google"/></svg></li><li><svg><use href="#maps"/></svg></li><li><svg><use href="#dart"/></svg></li><li><svg><use href="#dart"/></svg></li><li class="bare"><svg><use href="#github"/></svg></li>
      <li class="active"><svg viewBox="0 0 94 68"><path d="M0 68q16 0 16-16V16Q16 0 32 0h30q16 0 16 16v36q0 16 16 16z" fill="#fff"/><path d="M39 27l15 15m0-15L39 42" stroke="#3c4043" stroke-width="2.600"/></svg></li>
      <li><svg class="small"><use href="#flutter"/></svg></li><li><svg class="small"><use href="#flutter"/></svg></li><li><svg class="small"><use href="#flutter"/></svg></li><li><svg class="small"><use href="#flutter"/></svg></li>
    </ul>
    <svg class="plus" viewBox="0 0 24 24"><path d="M12 0v24M0 12h24" stroke="#3c4043" stroke-width="3.400"/></svg>
    <svg class="chev" viewBox="0 0 28 28"><circle cx="14" cy="14" r="14" fill="#3c4043"/><path d="M7.500 9.500h13L14 19z" fill="#dfe1e5"/></svg>
  </header>
  <div class="toolbar">
    <svg class="nav" viewBox="4 4 16 16"><path fill="#5f6368" d="M20 11H7.830l5.590-5.590L12 4l-8 8 8 8 1.410-1.410L7.830 13H20v-2z"/></svg>
    <svg class="nav" viewBox="4 4 16 16"><path fill="#5f6368" d="M4 11h12.170l-5.590-5.590L12 4l8 8-8 8-1.410-1.410L16.170 13H4v-2z"/></svg>
    <svg class="nav" viewBox="4 4 16 16"><path fill="#5f6368" d="M17.650 6.350C16.200 4.900 14.210 4 12 4c-4.420 0-7.990 3.580-7.990 8s3.570 8 7.990 8c3.730 0 6.840-2.550 7.730-6h-2.080c-.82 2.330-3.040 4-5.650 4-3.310 0-6-2.690-6-6s2.690-6 6-6c1.660 0 3.140.69 4.220 1.780L13 11h7V4l-2.350 2.350z"/></svg>
    <div class="omnibox">
      <svg class="lock" viewBox="4 1 16 21"><path fill="#5f6368" d="M18 8h-1V6c0-2.760-2.240-5-5-5S7 3.240 7 6v2H6c-1.100 0-2 .9-2 2v10c0 1.100.9 2 2 2h12c1.100 0 2-.9 2-2V10c0-1.100-.9-2-2-2zM9 6c0-1.660 1.340-3 3-3s3 1.340 3 3v2H9V6z"/></svg>
      <span class="url"><em>medium.com</em>/flutter-community/how-to-create-publish-and-manage-flutter-packages-b4f2cd2c6b90</span>
      <svg class="translate" viewBox="0 0 30 30"><rect x="12" y="6" width="16" height="22" rx="2" fill="none" stroke="#5f6368" stroke-width="2"/><path d="M2 1h10l6 22H4q-3 0-3-3V4q0-3 1-3z" fill="#5f6368"/><text x="3" y="17" font-family="Roboto" font-weight="700" font-size="14" fill="#f1f3f4">G</text><path d="M16 12h10m-5-2v2m4 0q-2 6-7 9m0-7q2 5 7 9" fill="none" stroke="#5f6368" stroke-width="1.600"/></svg>
      <svg class="star" viewBox="2 2 20 19"><path fill="#5f6368" d="M22 9.240l-7.190-.62L12 2 9.190 8.630 2 9.240l5.460 4.730L5.820 21 12 17.270 18.180 21l-1.630-7.030L22 9.240zM12 15.400l-3.760 2.270 1-4.280-3.320-2.880 4.380-.38L12 6.100l1.710 4.040 4.380.38-3.320 2.880 1 4.280L12 15.400z"/></svg>
    </div>
    <svg class="queue" viewBox="3 6 19 14"><path fill="#5f6368" d="M15 6H3v2h12V6zm0 4H3v2h12v-2zM3 16h8v-2H3v2zM17 6v8.180c-.31-.11-.65-.18-1-.18-1.660 0-3 1.340-3 3s1.340 3 3 3 3-1.340 3-3V8h3V6h-5z"/></svg>
    <span class="avatar">J</span>
    <span class="update">Mettre à jour<svg viewBox="0 0 6 28"><circle cx="3" cy="3.500" r="3"/><circle cx="3" cy="14" r="3"/><circle cx="3" cy="24.500" r="3"/></svg></span>
  </div>
  <div class="page">
    <aside class="side">
      <h2>Flutter Community</h2>
      <p>Articles and Stories from the<br>Flutter Community</p>
      <a class="follow">Follow</a>
      <div class="stats">
        <svg class="clap" viewBox="0 0 46 50" fill="none" stroke="#292929" stroke-width="1.900" stroke-linejoin="round" stroke-linecap="round"><path d="M16 1l2 5M23.500 0v5M31 1l-2 5"/><path d="M3 34l8 9q11 10 22 3 8-6 6-17l-2-9q-1-5-4-4-3 1-1 6L20 12q-3-2-4 0-1 2 1 4l7 8L13 13q-3-2-4 0-2 2 0 4l11 11L8 17q-3-2-4 0-2 2 1 5l12 10-9-7q-3-2-5 0-1 2 1 4z"/><path d="M31 18l-7-7q-2-2-4 1M34 15q4-3 5 3l3 9q5 14-7 21l-5 1"/></svg>
        <span>798</span>
        <svg class="bubble" viewBox="0 0 36 36" fill="none" stroke="#292929" stroke-width="2"><path d="M31 27c6-10 2-26-14-26C7 1 1 8 1 17s6 16 15 16q5 0 9-3 3 4 8 4z" stroke-linejoin="round"/></svg>
        <span>5</span>
        <svg class="mark" viewBox="0 0 27 35" fill="none" stroke="#757575" stroke-width="1.800"><path d="M1 34V3q0-2 2-2h21q2 0 2 2v31L13.500 25z"/></svg>
      </div>
    </aside>
    <article class="story">
      <div class="code">
<pre>Copyright (c) 2019 Onat Çipli</pre>
<pre><mark>Permission is hereby granted, free of charge, to any person&nbsp;&nbsp;</mark>
<mark>obtaining a copy&nbsp;</mark>
<mark>of this software and associated documentation files (the&nbsp;&nbsp;</mark>
<mark>"Software"), to deal&nbsp;</mark>
<mark>in the Software without restriction, including without limitation&nbsp;&nbsp;</mark>
<mark>the rights&nbsp;</mark>
<mark>to use, copy, modify, merge, publish, distribute, sublicense, and/or&nbsp;&nbsp;</mark>
<mark>sell&nbsp;</mark>
<mark>copies of the Software, and to permit persons to whom the Software&nbsp;&nbsp;</mark>
<mark>is&nbsp;</mark>
<mark>furnished to do so, subject to the following conditions:&nbsp;</mark></pre>
<pre><mark>The above copyright notice and this permission notice shall be&nbsp;&nbsp;</mark>
<mark>included in all&nbsp;</mark>
<mark>copies or substantial portions of the Software.&nbsp;</mark></pre>
<pre><mark>THE SOFTWARE IS PROVIDED "AS IS", WITHOUT WARRANTY OF ANY KIND,&nbsp;&nbsp;</mark>
<mark>EXPRESS OR</mark>
IMPLIED, INCLUDING BUT NOT LIMITED TO THE WARRANTIES OF
MERCHANTABILITY,
FITNESS FOR A PARTICULAR PURPOSE AND NONINFRINGEMENT. IN NO EVENT
SHALL THE
AUTHORS OR COPYRIGHT HOLDERS BE LIABLE FOR ANY CLAIM, DAMAGES OR
OTHER
LIABILITY, WHETHER IN AN ACTION OF CONTRACT, TORT OR OTHERWISE,
ARISING FROM,
OUT OF OR IN CONNECTION WITH THE SOFTWARE OR THE USE OR OTHER
DEALINGS IN THE
SOFTWARE.</pre>
      </div>
      <div class="rule"><i></i><i></i><i></i></div>
    </article>
    <div class="track"><i></i></div>
  </div>
</main>

<footer class="dock">
  <div class="app on"><svg><use href="#finder"/></svg></div>
  <div class="app"><svg><use href="#siri"/></svg></div>
  <div class="app"><svg><use href="#launchpad"/></svg></div>
  <div class="app"><svg><use href="#safari"/></svg></div>
  <div class="app on"><svg><use href="#chrome"/></svg></div>
  <div class="app"><svg class="w78"><use href="#contacts"/></svg></div>
  <div class="app on"><svg><use href="#calendar"/></svg></div>
  <div class="app"><svg><use href="#notes"/></svg></div>
  <div class="app"><svg><use href="#reminders"/></svg></div>
  <div class="app"><svg><use href="#mapsapp"/></svg></div>
  <div class="app"><svg><use href="#photosapp"/></svg></div>
  <div class="app"><svg><use href="#messages"/></svg></div>
  <div class="app"><svg class="tall"><use href="#pages"/></svg></div>
  <div class="app"><svg class="w80"><use href="#numbers"/></svg></div>
  <div class="app"><svg class="tall key"><use href="#keynote"/></svg></div>
  <div class="app"><svg class="big"><use href="#xcode"/></svg></div>
  <div class="app on"><svg><use href="#appstore"/></svg></div>
  <div class="app on"><svg><use href="#settings"/></svg><span class="badge">1</span></div>
  <div class="app"><svg><use href="#capture"/></svg><span class="tip">Capture d’écran<svg viewBox="0 0 34 20"><path d="M0 0h34q-5 1-8 7l-6 10q-3 3-6 0L8 7Q5 1 0 0z" fill="#edebec"/><path d="M0 .500q5 1 8 6.500l6 10q3 3 6 0l6-10q3-5.500 8-6.500" fill="none" stroke="#c9c9c9"/></svg></span></div>
  <div class="app on"><svg class="w82"><use href="#device"/></svg></div>
  <i class="sep"></i>
  <div class="app on"><svg><use href="#vscode"/></svg></div>
  <div class="app on"><svg><use href="#terminal"/></svg></div>
  <div class="app on"><svg><use href="#onenote"/></svg></div>
  <div class="app on"><svg class="round"><use href="#studio"/></svg><span class="badge ok"><svg viewBox="0 0 20 18"><path d="M2 9l6 6L18 2" fill="none" stroke="#fff" stroke-width="4.500"/></svg></span></div>
  <div class="app on"><svg class="w80 sim"><use href="#simulator"/></svg></div>
  <i class="sep"></i>
  <div class="app"><svg class="bin"><use href="#trash"/></svg></div>
</footer>
</body>
</html>
```
FILE: styles.css
```css
* { box-sizing: border-box; margin: 0; padding: 0; }

body {
  position: relative;
  width: 2880px;
  height: 1800px;
  overflow: hidden;
  font-family: Inter, "Liberation Sans", sans-serif;
  background:
    linear-gradient(#33305c, #1f4668 160px, #1b4262) 0 1508px / 60px 292px no-repeat,
    linear-gradient(90deg, #d8385c 0, #a82a4c 580px, #214a73 600px, #1b3a5c 2000px, #2a68a6);
}

svg { display: block; flex: none; overflow: visible; }
.sprite { position: absolute; width: 0; height: 0; visibility: hidden; }
.sprite clipPath, .sprite clipPath rect { visibility: visible; }

/* background windows */
.win { position: absolute; overflow: hidden; }

.win-list {
  left: 0; top: 700px; width: 60px; height: 808px;
  padding-top: 123px;
  background: linear-gradient(90deg, #e4e4e4, #bcbcbc 34px);
  color: #1d1d1d; font-size: 28px; line-height: 36px;
  font-family: "Liberation Sans", Arial, sans-serif;
}
.win-list p { height: 36px; margin-bottom: 36px; white-space: nowrap; }
.win-list p:nth-child(1) { letter-spacing: -.5px; }
.win-list p:nth-child(2) { margin-bottom: 15px; }
.win-list .picked { height: 72px; margin-bottom: 236px; background: linear-gradient(90deg, #c9c9c9, #a5a5a5 34px); }
.win-list .far { margin-bottom: 128px; }
.win-list .link { padding-top: 28px; height: 90px; border-top: 2px solid #c4c4c4; color: #6b2a9c; font-weight: bold; text-indent: -14px; }

.win-back-left {
  z-index: 1;
  left: 0; top: 50px; width: 80px; height: 770px;
  border-radius: 20px 0 0 24px;
  background: linear-gradient(90deg, #dcdadb, #b9b6b7 34px);
  border-bottom: 2px solid #9b9b9b;
  padding-top: 104px;
}
.divider { display: block; height: 2px; background: #b1afb0; }
.knob { display: block; width: 40px; height: 56px; margin: 158px 0 0 20px; border-radius: 10px; background: #aaa8a9; }

.win-finder { left: 58px; top: 1500px; width: 2822px; height: 300px; background: #e4e4e4; }
.win-finder aside {
  width: 304px; height: 300px; padding: 149px 0 0 33px;
  background: linear-gradient(#8f8d8e 160px, #d8d3d5 250px, #dedadb);
  color: #767475; font-size: 23px; line-height: 28px;
}
.finder-row {
  display: flex; align-items: center; gap: 11px;
  margin: -23px 0 0 329px;
  color: #6a6a6a; font-size: 23px; line-height: 30px; letter-spacing: -.65px;
}
.finder-row svg { width: 24px; height: 20px; }

.win-far-right { left: 2700px; top: 50px; width: 180px; height: 1750px; border-radius: 0 20px 0 0; background: linear-gradient(#e4e2e3, #dedede 90%, #fafafa 96%); }
.win-far-right::after { content: ""; position: absolute; left: 0; right: 0; top: 1711px; height: 2px; background: #d2d2d2; }

.win-right { left: 2600px; top: 80px; width: 280px; height: 1584px; display: flex; flex-direction: column; border-radius: 0 22px 22px 0; border-bottom: 2px solid #8b8b8b; background: #f4f4f4; }
.right-tabs { height: 84px; padding: 34px 0 0 222px; background: #dcdcde; border-top: 2px solid #c9c7c8; }
.right-tabs svg { width: 28px; height: 28px; }
.right-tools { height: 74px; padding: 8px 16px 0 0; display: flex; justify-content: flex-end; border-bottom: 2px solid #d5d5d5; }
.right-pill { display: flex; align-items: center; justify-content: space-between; width: 200px; height: 56px; padding: 0 24px 0 113px; border: 3px solid #3c7a48; border-radius: 28px; background: #dfe5e0; color: #55735b; font-size: 25px; }
.right-pill i { width: 6px; height: 27px; background: radial-gradient(circle, #2f7440 2.700px, transparent 3.200px) 0 0 / 6px 9px; }
.right-page { flex: 1; display: flex; }
.right-main { width: 252px; padding: 36px 0 0 173px; border-right: 2px solid #cfcfcf; font: bold 25px/36px "Open Sans", sans-serif; color: #111; background: linear-gradient(90deg, #bdbdbd 187px, #f4f4f4); display: flex; flex-direction: column; }
.right-main b { height: 74px; border-bottom: 2px solid #cfcfcf; }
.right-main .low { margin: auto 0 0 0; padding: 16px 0 0 14px; height: 64px; border: 0; border-top: 2px solid #cacaca; }
.right-track { flex: 1; padding: 3px 0 0 6px; background: #ededed; }
.right-track i { display: block; width: 16px; height: 38px; border-radius: 8px; background: #bdbdbd; }

/* menu bar */
.menubar {
  position: relative; z-index: 3;
  display: flex; align-items: center; gap: 42px;
  height: 48px; padding: 0 37px 0 44px;
  background: linear-gradient(90deg, #83618f 0, #7a6a9b 250px, #6a74a6 560px, #5b79ae 900px, #447fb5 1440px, #3877b0 2000px, #2e6aab);
  color: #fff; font-size: 25.300px; line-height: 46px; white-space: nowrap;
  text-shadow: 0 3px 6px rgba(0, 0, 0, .25);
}
.menubar b, .menubar span, .menubar time { margin-top: -1px; }
.menubar b { letter-spacing: -.1px; }
.apple { width: 26px; height: 32px; margin: -3px 3px 0 0; }
.status { display: flex; align-items: center; margin-left: auto; }
.status svg { filter: drop-shadow(0 3px 3px rgba(0, 0, 0, .2)); }
.st-drive { width: 32px; height: 32px; }
.st-cloud { width: 40px; height: 26px; margin-left: 36px; }
.st-up { width: 40px; height: 27px; margin-left: 46px; }
.st-play { width: 26px; height: 26px; margin-left: 45px; }
.st-bt { width: 20px; height: 29px; margin: -3px 0 0 41px; }
.st-bat { width: 51px; height: 24px; margin-left: 38px; }
.st-wifi { width: 32px; height: 24px; margin-left: 37px; }
.st-find { width: 25px; height: 25px; margin-left: 39px; }
.st-cc { width: 28px; height: 26px; margin-left: 38px; }
.status .st-siri { width: 27px; height: 27px; margin-left: 35px; border-radius: 50%; overflow: hidden; }
.status time { width: 233px; margin-left: 32px; font-size: 25.900px; }

/* browser window */
.browser {
  position: absolute; z-index: 2; left: 34px; top: 50px;
  width: 2752px; height: 1612px;
  display: flex; flex-direction: column;
  border-radius: 20px; overflow: hidden;
  background: #fff;
  box-shadow: 0 0 0 1px rgba(0, 0, 0, .3), 0 10px 36px rgba(0, 0, 0, .45);
}
.tabstrip { display: flex; align-items: center; height: 84px; background: #dfe1e5; box-shadow: inset 0 2px 0 #f1f2f4; }
.lights { display: flex; gap: 16px; width: 188px; margin-top: 2px; padding-left: 42px; }
.lights i { width: 24px; height: 24px; border-radius: 50%; }
.red { background: #ec6a5f; }
.amber { background: #f5bf50; }
.green { background: #62c554; }
.tabs { display: flex; height: 84px; padding-top: 31px; list-style: none; }
.tabs li { flex: none; width: 38px; height: 40px; padding: 3px 5px 0; border-right: 2px solid #8d8f93; overflow: clip; overflow-clip-margin: content-box; }
.tabs .wide { width: 40px; }
.tabs li > svg { width: 32px; height: 32px; margin-right: -10px; }
.tabs .bare { border-color: transparent; }
.tabs li > .small { width: 29px; height: 29px; margin-top: 1px; }
.tabs .active { width: 62px; padding: 0; border: 0; overflow: visible; margin-top: -15px; }
.tabs .active svg { width: 94px; height: 68px; margin: 0 0 0 -16px; }
.plus { width: 24px; height: 24px; margin: 16px 0 0 32px; }
.chev { width: 28px; height: 28px; margin: 16px 0 0 130px; }

.toolbar { display: flex; align-items: center; height: 74px; padding: 0 16px 2px 31px; border-bottom: 2px solid #dcdde1; background: #fff; }
.nav { width: 26px; height: 26px; margin-right: 38px; }
.nav + .nav + .nav { margin-right: 31px; }
.omnibox { display: flex; align-items: center; width: 2132px; height: 56px; margin-left: -2px; padding: 0 20px 0 29px; border-radius: 28px; background: #f1f3f4; }
.lock { width: 16px; height: 21px; }
.url { margin: 0 auto 0 24px; color: #5f6368; font-family: "Open Sans", sans-serif; font-size: 28.800px; letter-spacing: .120px; white-space: nowrap; }
.url em { font-style: normal; color: #202124; }
.translate { width: 30px; height: 30px; margin-right: 33px; }
.star { width: 30px; height: 28px; }
.queue { width: 33px; height: 25px; margin: 0 26px 0 29px; }
.avatar { width: 44px; height: 44px; border-radius: 50%; background: #72993e; color: #fff; font: 26px/44px Roboto, sans-serif; text-align: center; }
.update { display: flex; align-items: center; justify-content: space-between; width: 244px; height: 56px; margin-left: auto; padding: 0 22px 0 23px; border: 3px solid #3a7b43; border-radius: 28px; background: #ecf3ee; color: #38743f; font-size: 25.900px; line-height: 46px; white-space: nowrap; }
.update svg { width: 6px; height: 28px; fill: #38743f; }

/* article */
.page { flex: 1; min-height: 0; display: flex; overflow: hidden; }
.side { width: 682px; padding: 211px 118px 0 169px; font-family: "Liberation Sans", Arial, sans-serif; }
.side h2 { font-size: 30px; line-height: 44px; color: #292929; white-space: nowrap; }
.side p { margin-top: 4px; font-size: 28px; line-height: 40px; letter-spacing: .08px; color: #757575; white-space: nowrap; }
.follow { display: block; width: 149px; height: 76px; margin-top: 37px; border-radius: 38px; background: #3a8ee0; color: #fff; font-size: 28px; line-height: 77px; text-align: center; }
.stats { display: flex; align-items: center; margin-top: 64px; padding-top: 58px; border-top: 2px solid #e6e6e6; color: #757575; font-size: 29px; }
.clap { width: 46px; height: 50px; margin-right: 15px; }
.stats span { padding-top: 18px; }
.bubble { width: 36px; height: 36px; margin: 13px 17px 0 64px; }
.mark { width: 27px; height: 35px; margin: 13px 0 0 62px; }

.story { width: 1360px; }
.code { height: 1215px; padding-left: 39.500px; background: #f2f2f2; overflow: hidden; }
.code pre { margin-bottom: 58px; font: 32px/36px "DejaVu Sans Mono", monospace; letter-spacing: -.704px; color: #292929; }
.code pre:first-child { margin-top: -5px; }
.code mark { background: rgba(139, 187, 249, .6); color: inherit; }
.rule { display: flex; gap: 41px; padding: 113px 0 0 629px; }
.rule i { width: 6px; height: 6px; border-radius: 50%; background: #292929; }

.track { width: 30px; margin-left: auto; padding: 652px 0 0 7px; border-left: 2px solid #e8e8e8; background: #fafafa; }
.track i { display: block; width: 15px; height: 60px; border-radius: 8px; background: #c1c1c1; }
.browser::after { content: ""; position: absolute; left: 0; right: 0; bottom: 0; height: 90px; background: linear-gradient(transparent, rgba(0, 0, 0, .04) 50%, rgba(0, 0, 0, .13)); }

/* dock */
.dock {
  position: absolute; z-index: 4; left: 82px; top: 1668px;
  display: flex; width: 2717px; height: 122px; padding: 0 6px;
  border-radius: 36px;
  background: linear-gradient(90deg, rgba(224, 205, 214, .6), transparent 600px), linear-gradient(#d6d3d5, #e8e6e7);
  box-shadow: inset 0 0 0 1px rgba(255, 255, 255, .35), 0 0 0 1px rgba(0, 0, 0, .15), 0 0 18px rgba(0, 0, 0, .25);
}
.app { position: relative; display: flex; justify-content: center; flex: 0 0 100.500px; padding-top: 19px; }
.app > svg { width: 74px; height: 74px; filter: drop-shadow(0 1px 1px rgba(0, 0, 0, .25)); }
.app.on::after { content: ""; position: absolute; left: 46px; top: 110px; width: 8px; height: 8px; border-radius: 50%; background: #666; }
.app > .w78 { width: 78px; margin-left: 3px; }
.app > .w80 { width: 80px; }
.app > .sim { height: 80px; margin-left: 6px; }
.app > .w82 { width: 82px; }
.app > .tall { height: 84px; margin-top: -5px; }
.app > .key { margin-top: -3px; }
.app > .big { width: 82px; height: 84px; margin: -6px 0 0 8px; }
.app > .round { width: 82px; height: 82px; margin-top: -5px; }
.app > .bin { width: 66px; height: 84px; margin-top: -6px; }
.sep { flex: none; width: 2px; height: 90px; margin: 16px 22px 0; background: #a9a7a8; }
.badge { position: absolute; left: 63px; top: 9px; width: 35px; height: 35px; border-radius: 50%; background: #e8584a; color: #fff; font-size: 20px; line-height: 35px; text-align: center; box-shadow: 0 1px 3px rgba(0, 0, 0, .3); }
.badge.ok { left: 61px; top: 11px; width: 33px; height: 33px; padding: 8px 7px; background: #4c9f33; }
.badge svg { width: 19px; height: 17px; }
.tip { position: absolute; left: -81px; top: -87px; width: 263px; height: 53px; border: 1px solid #c9c9c9; border-radius: 10px; background: #edebec; color: #1a1a1a; font-size: 27px; line-height: 51px; text-align: center; white-space: nowrap; box-shadow: 0 1px 5px rgba(0, 0, 0, .25); }
.tip svg { position: absolute; left: 115px; top: 51px; width: 34px; height: 20px; }
```
